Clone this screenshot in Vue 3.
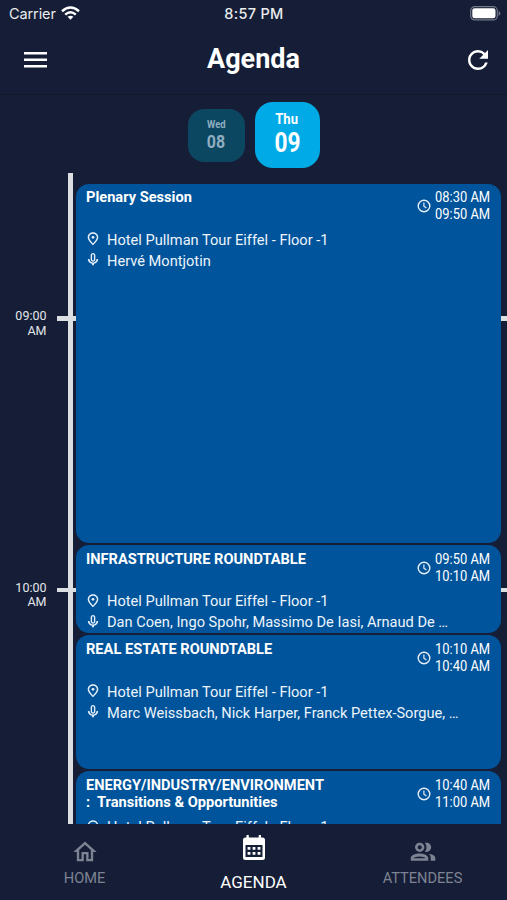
<script setup>
const hours = ['09:00', '10:00']
const place = 'Hotel Pullman Tour Eiffel - Floor -1'
const sessions = [
  { title: ['Plenary Session'], start: '08:30 AM', end: '09:50 AM', minutes: 80, speakers: 'Hervé Montjotin' },
  { title: ['INFRASTRUCTURE ROUNDTABLE'], start: '09:50 AM', end: '10:10 AM', minutes: 20, speakers: 'Dan Coen, Ingo Spohr, Massimo De Iasi, Arnaud De …' },
  { title: ['REAL ESTATE ROUNDTABLE'], start: '10:10 AM', end: '10:40 AM', minutes: 30, speakers: 'Marc Weissbach, Nick Harper, Franck Pettex-Sorgue, …' },
  { title: ['ENERGY/INDUSTRY/ENVIRONMENT', ':  Transitions & Opportunities'], start: '10:40 AM', end: '11:00 AM', minutes: 20, speakers: '' },
]
const cardHeight = (s) => s.minutes * 4.52 - 2.5 + 'px'
</script>

<template>
  <div class="screen">
    <div class="status">
      <div class="carrier">
        <span>Carrier</span>
        <svg width="19" height="14" viewBox="0 0 19 14" fill="none" stroke="#fff" stroke-width="2.5">
          <path d="M1 5.2Q9.5-2.2 18 5.2" />
          <path d="M4.2 8.6Q9.5 4 14.8 8.6" />
          <path d="M6.6 10.8Q9.5 8.5 12.4 10.8L9.5 13.8Z" fill="#fff" stroke="none" />
        </svg>
      </div>
      <span class="clock">8:57 PM</span>
      <svg class="battery" width="31" height="15" viewBox="0 0 31 15">
        <rect x=".7" y=".7" width="26.6" height="13.2" rx="4" fill="none" stroke="#737887" stroke-width="1.2" />
        <rect x="2.3" y="2.3" width="23.2" height="10" rx="2.3" fill="#fff" />
        <path d="M28.6 5v5q1.8-.7 1.8-2.5T28.600 5Z" fill="#737887" />
      </svg>
    </div>

    <header class="header">
      <svg class="menu" width="23" height="17" viewBox="0 0 23 17" fill="#fff">
        <path d="M0 0h23v2.600H0zM0 6.500h23v2.600H0zM0 13h23v2.600H0z" />
      </svg>
      <h1>Agenda</h1>
      <svg class="refresh" width="30" height="30" viewBox="0 0 24 24" fill="#fff">
        <path d="M17.650 6.350A7.958 7.958 0 0 0 12 4c-4.420 0-7.990 3.580-7.990 8s3.570 8 7.990 8c3.730 0 6.840-2.550 7.730-6h-2.080A5.990 5.990 0 0 1 12 18c-3.310 0-6-2.690-6-6s2.690-6 6-6c1.660 0 3.140.69 4.220 1.780L13 11h7V4z" />
      </svg>
    </header>

    <div class="days">
      <button class="day">
        <span class="weekday">Wed</span>
        <span class="date">08</span>
      </button>
      <button class="day selected">
        <span class="weekday">Thu</span>
        <span class="date">09</span>
      </button>
    </div>

    <main class="timeline">
      <div class="hours">
        <div v-for="h in hours" :key="h" class="hour">
          <span class="tick"></span>{{ h }}<br />AM
        </div>
      </div>
      <div class="rail"></div>
      <div class="cards">
        <article v-for="s in sessions" :key="s.start" class="card" :style="{ height: cardHeight(s) }">
          <div class="top">
            <h2><span v-for="t in s.title" :key="t">{{ t }}</span></h2>
            <div class="time">
              <svg width="14" height="14" viewBox="0 0 14 14" fill="none" stroke="#e4effa" stroke-width="1.400">
                <circle cx="7" cy="7" r="5.800" />
                <path d="M6.900 3.600v3.600l2.500 1.900" stroke-width="1.200" />
              </svg>
              <div class="range">{{ s.start }}<br />{{ s.end }}</div>
            </div>
          </div>
          <div class="line">
            <svg width="16" height="16" viewBox="0 0 24 24" fill="#e4effa">
              <path d="M12 2C8 2 4 5 4 9.500 4 14.500 12 21.500 12 21.500s8-7 8-12C20 5 16 2 12 2zm0 2.200c3.200 0 5.800 2.400 5.800 5.300 0 2.800-3.600 7-5.800 9.200-2.200-2.200-5.800-6.400-5.800-9.200 0-2.900 2.600-5.300 5.800-5.300z" />
              <circle cx="12" cy="9.500" r="2.100" />
            </svg>
            <span>{{ place }}</span>
          </div>
          <div v-if="s.speakers" class="line">
            <svg width="16" height="16" viewBox="0 0 24 24" fill="#e4effa">
              <path d="M12 14.500c2 0 3.500-1.500 3.500-3.500V5c0-2-1.500-3.500-3.500-3.500S8.500 3 8.500 5v6c0 2 1.500 3.500 3.500 3.500zm-1.400-9.600a1.400 1.400 0 0 1 2.800 0v6.200a1.400 1.400 0 0 1-2.800 0z" />
              <path d="M17.300 10.500c0 3-2.540 5.100-5.300 5.100s-5.300-2.100-5.300-5.100H4.200c0 3.700 2.920 6.700 6.400 7.200V20h2.800v-2.300c3.480-.5 6.400-3.500 6.400-7.200z" />
            </svg>
            <span>{{ s.speakers }}</span>
          </div>
        </article>
      </div>
    </main>

    <nav class="tabs">
      <a class="tab">
        <svg width="28" height="28" viewBox="0 0 24 24" fill="currentColor">
          <path d="m12 5.690 5 4.500V18h-2v-6H9v6H7v-7.810l5-4.500M12 3 2 12h3v8h6v-6h2v6h6v-8h3L12 3z" />
        </svg>
        <span>HOME</span>
      </a>
      <a class="tab current">
        <svg width="24" height="25" viewBox="0 0 24 25">
          <path fill="#fff" d="M4.500 0h2.300v2.500h9.900V0H19v2.500h1.500a2.500 2.500 0 0 1 2.500 2.500v17.500a2.500 2.500 0 0 1-2.500 2.500h-17A2.500 2.500 0 0 1 1 22.500V5a2.500 2.500 0 0 1 2.500-2.500h1z" />
          <path fill="#151e36" d="M3.500 10h17v12h-17z" />
          <path fill="#fff" d="M5.600 12h2.800v2.800H5.600zM10.600 12h2.800v2.800h-2.800zM15.600 12h2.800v2.800h-2.800zM5.600 17h2.800v2.800H5.600zM10.600 17h2.800v2.800h-2.800zM15.600 17h2.800v2.800h-2.800z" />
        </svg>
        <span>AGENDA</span>
      </a>
      <a class="tab">
        <svg width="28" height="28" viewBox="0 0 24 24" fill="currentColor">
          <path fill-rule="evenodd" d="M16.670 13.500C18.040 14.260 18.600 15.500 18.600 17v2.500h3.900V17c0-2.100-3.200-3.200-5.830-3.500zM15 12c2.210 0 4-1.790 4-4s-1.790-4-4-4c-.47 0-.91.1-1.330.24C14.500 5.270 15 6.580 15 8s-.5 2.730-1.330 3.760c.42.14.86.24 1.330.24zM9.200 12c2.210 0 4-1.790 4-4s-1.790-4-4-4-4 1.790-4 4 1.790 4 4 4zm0-5.800a1.800 1.800 0 1 1 0 3.600 1.800 1.800 0 0 1 0-3.600zM9 13.200c-2.670 0-7.500 1.240-7.500 3.800v2.500h15V17c0-2.560-4.830-3.800-7.500-3.800zm5.300 4.100H3.700c.8-.8 3.200-1.500 5.300-1.500s4.500.7 5.300 1.500z" />
        </svg>
        <span>ATTENDEES</span>
      </a>
    </nav>
  </div>
</template>

<style>
body {
  background: #151e36;
}
</style>

<style scoped>
.screen {
  width: 507px;
  height: 900px;
  display: flex;
  flex-direction: column;
  overflow: hidden;
  background: #151e36;
  color: #fff;
  font-family: Roboto, sans-serif;
}
.status {
  height: 27px;
  flex: none;
  display: grid;
  grid-template-columns: 1fr auto 1fr;
  align-items: center;
  padding: 0 6px 0 9px;
  box-sizing: border-box;
  font: 14.500px/27px Inter, sans-serif;
  color: #e9ebef;
}
.carrier {
  display: flex;
  align-items: center;
  gap: 6px;
  letter-spacing: -.1px;
}
.carrier svg {
  margin: 0 0 2px -1px;
}
.clock {
  margin-right: 2px;
  font-weight: 500;
  letter-spacing: .3px;
}
.battery {
  justify-self: end;
}
.header {
  height: 68px;
  flex: none;
  display: grid;
  grid-template-columns: 1fr auto 1fr;
  align-items: center;
  padding: 0 14px 0 24px;
  box-sizing: border-box;
  border-bottom: 1px solid #10182a;
}
h1 {
  margin: 0 10px 3px 0;
  font-size: 27px;
  line-height: 32px;
  font-weight: 700;
}
.menu {
  margin-bottom: 1px;
}
.refresh {
  justify-self: end;
  margin-bottom: 2px;
}
.days {
  height: 78px;
  flex: none;
  display: flex;
  justify-content: center;
  align-items: center;
  gap: 10px;
  padding-top: 2px;
  box-sizing: border-box;
}
.day {
  width: 57px;
  height: 53px;
  margin-top: 1px;
  padding: 0;
  border: 0;
  border-radius: 16px;
  background: #0c4762;
  color: #8faec0;
  font-family: Roboto, sans-serif;
  font-weight: 700;
  display: flex;
  flex-direction: column;
  align-items: center;
  justify-content: center;
}
.weekday {
  font-size: 10.500px;
  line-height: 13px;
  transform: scaleX(.9);
}
.date {
  font-size: 19px;
  line-height: 22px;
  transform: scaleX(.84);
}
.selected {
  width: 65px;
  height: 66px;
  margin-top: 0;
  margin-bottom: 1px;
  border-radius: 18px;
  background: #00aae7;
  color: #fff;
}
.selected .weekday {
  font-size: 14.500px;
  line-height: 17px;
}
.selected .date {
  font-size: 27px;
  line-height: 31px;
}
.timeline {
  height: 651px;
  flex: none;
  display: flex;
  overflow: hidden;
  position: relative;
}
.hours {
  width: 67.500px;
  flex: none;
  padding-top: 136px;
}
.hour {
  height: 271.500px;
  padding-right: 21px;
  position: relative;
  text-align: right;
  font-size: 12.500px;
  line-height: 14.500px;
  color: #e3e5ea;
}
.tick {
  position: absolute;
  left: 57px;
  top: 7px;
  width: 450px;
  height: 4.500px;
  background: #dcdfe2;
}
.rail {
  width: 5px;
  flex: none;
  background: #dcdfe2;
  position: relative;
}
.cards {
  position: relative;
  width: 425px;
  margin-left: 3.500px;
  padding-top: 10.500px;
  flex: none;
  display: flex;
  flex-direction: column;
  gap: 2.500px;
}
.card {
  flex: none;
  box-sizing: border-box;
  overflow: hidden;
  padding: 5.500px 11px 0 10px;
  border-radius: 13px;
  background: #00549b;
}
.top {
  height: 40.600px;
  display: flex;
  justify-content: space-between;
}
h2 {
  margin: 0;
  font-size: 14.620px;
  line-height: 17.300px;
  font-weight: 700;
}
h2 span {
  display: block;
  white-space: pre;
}
.time {
  display: flex;
  align-items: center;
  height: 34.600px;
  gap: 4px;
}
.range {
  width: 55px;
  white-space: nowrap;
  font-size: 14.620px;
  line-height: 17.200px;
  transform: scaleX(.885);
  transform-origin: left;
}
.line {
  display: flex;
  align-items: center;
  height: 21px;
  gap: 6px;
  margin-left: -1px;
  font-size: 14.620px;
  line-height: 21px;
  white-space: nowrap;
  color: #edf4fb;
}
.line svg {
  margin-bottom: 2px;
}
.tabs {
  flex: 1;
  display: grid;
  grid-template-columns: 169px 169px 169px;
  background: #151e36;
}
.tab {
  display: flex;
  flex-direction: column;
  align-items: center;
  padding-top: 14px;
  font-size: 14.600px;
  line-height: 17px;
  color: #7d8393;
}
.tab span {
  margin-top: 4px;
}
.current {
  padding-top: 11px;
  font-size: 17px;
  line-height: 20px;
  color: #fff;
}
.current span {
  margin-top: 11.500px;
}
</style>
